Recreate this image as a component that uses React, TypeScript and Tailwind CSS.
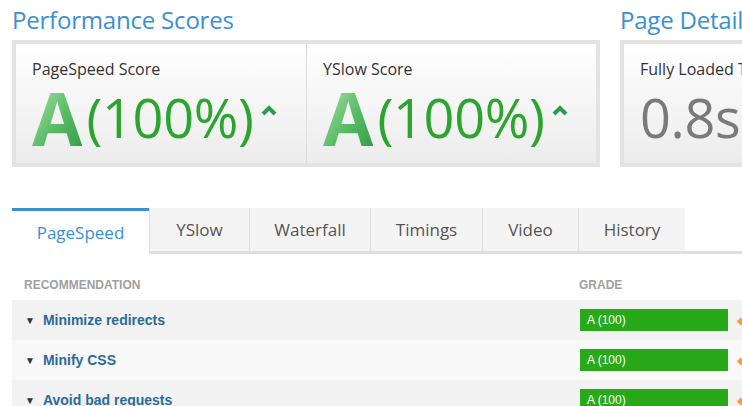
const TABS = ["PageSpeed", "YSlow", "Waterfall", "Timings", "Video", "History"];
const TAB_WIDTHS = ["w-[137px]", "w-[100px]", "w-[121px]", "w-[112px]", "w-[96px]", "w-[107px]"];

const ROWS = ["Minimize redirects", "Minify CSS", "Avoid bad requests"];

function Caret() {
  return (
    <svg width="18" height="12" viewBox="0 0 18 12" className="ml-[6px] mb-[14px]">
      <polyline points="3,10 9,4 15,10" fill="none" stroke="#2e9a4f" strokeWidth="4" />
    </svg>
  );
}

function ScoreCell({ label, border }: { label: string; border?: boolean }) {
  return (
    <div className={`w-1/2 min-w-0 pl-4 pt-[15px] ${border ? "border-l border-[#dcdcdc]" : ""}`}>
      <div className="text-[16px] leading-5 text-[#333]">{label}</div>
      <div className="flex items-center mt-[6px] h-[64px]">
        <span className="text-[73px] leading-none font-bold bg-gradient-to-br from-[#b6e3b6] via-[#5cc06a] to-[#2f9a45] bg-clip-text text-transparent">
          A
        </span>
        <span className="text-[54px] leading-none text-[#2ba52e] font-normal ml-[4px] tracking-[-0.3px]">(100%)</span>
        <Caret />
      </div>
    </div>
  );
}

export default function App() {
  return (
    <div className="w-[742px] h-[406px] overflow-hidden bg-white font-['Open_Sans',sans-serif]">
      <div className="flex w-[900px] pl-3 gap-5">
        <div className="w-[588px] shrink-0">
          <h2 className="text-[24px] leading-[40px] text-[#3b8fd3] tracking-[-0.2px]">Performance Scores</h2>
          <div className="h-[127px] border-4 border-[#e3e3e3] bg-gradient-to-b from-white to-[#ececec] flex">
            <ScoreCell label="PageSpeed Score" />
            <ScoreCell label="YSlow Score" border />
          </div>
        </div>
        <div className="w-[260px] shrink-0">
          <h2 className="text-[24px] leading-[40px] text-[#3b8fd3] tracking-[-0.2px]">Page Details</h2>
          <div className="h-[127px] border-4 border-[#e3e3e3] bg-gradient-to-b from-white to-[#ececec] pl-4 pt-[15px]">
            <div className="text-[16px] leading-5 text-[#333]">Fully Loaded Time</div>
            <div className="text-[54px] leading-[64px] mt-[6px] text-[#7a7a7a] font-normal tracking-[-0.3px]">0.8s</div>
          </div>
        </div>
      </div>

      <div className="pl-3 mt-[41px] flex">
        {TABS.map((t, i) =>
          i === 0 ? (
            <div
              key={t}
              className={`${TAB_WIDTHS[i]} shrink-0 h-[46px] border-t-[3px] border-[#3b8fd3] bg-white flex items-center justify-center text-[17px] text-[#3b8fd3]`}
            >
              {t}
            </div>
          ) : (
            <div
              key={t}
              className={`${TAB_WIDTHS[i]} shrink-0 h-[46px] bg-[#f4f4f4] border-l border-[#dedede] border-b-[3px] border-b-[#dedede] flex items-center justify-center text-[17px] text-[#555]`}
            >
              {t}
            </div>
          )
        )}
        <div className="flex-1 h-[46px] border-b-[3px] border-[#dedede]" />
      </div>

      <div className="pl-3 font-['Liberation_Sans',Arial,sans-serif]">
        <div className="flex h-[46px] items-start pt-[24px] text-[12px] leading-[14px] font-bold text-[#a0a0a0]">
          <div className="w-[567px] shrink-0 pl-3">RECOMMENDATION</div>
          <div>GRADE</div>
        </div>
        {ROWS.map((r, i) => (
          <div key={r} className={`flex w-[740px] h-[40px] items-center ${i % 2 === 0 ? "bg-[#f2f2f2]" : "bg-[#f8f8f8]"}`}>
            <div className="w-[568px] shrink-0 pl-[13px] flex items-center">
              <span className="text-[10px] text-[#333] mr-[8px]">▼</span>
              <span className="text-[14px] font-bold text-[#2b6a9b]">{r}</span>
            </div>
            <div className="w-[148px] shrink-0 h-[22px] bg-[#27a919] text-white text-[12px] flex items-center pl-[7px]">
              A (100)
            </div>
            <span className="ml-[9px] shrink-0 text-[10px] text-[#f0a040]">◆</span>
          </div>
        ))}
      </div>
    </div>
  );
}
